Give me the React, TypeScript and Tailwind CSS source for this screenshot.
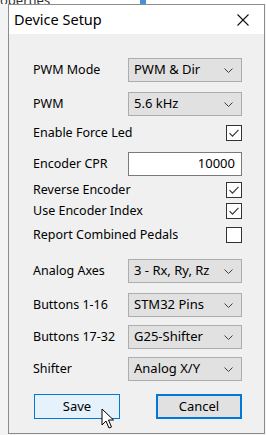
const font = "font-['Noto_Sans','Open_Sans',sans-serif]";

function Chevron() {
  return (
    <svg width="9" height="5" viewBox="0 0 9 5" fill="none">
      <path d="M0.5 0.5 L4.5 4.5 L8.5 0.5" stroke="#404040" strokeWidth="1" />
    </svg>
  );
}

function Select({ value }: { value: string }) {
  return (
    <div className="w-[114px] h-[24px] flex items-center justify-between pl-[5px] pr-[8px] bg-[#e1e1e1] border border-[#adadad] text-[13px] text-black">
      <span>{value}</span>
      <Chevron />
    </div>
  );
}

function Check({ checked }: { checked: boolean }) {
  return (
    <div className="w-[16px] h-[16px] bg-white border border-[#333] flex items-center justify-center">
      {checked && (
        <svg width="12" height="12" viewBox="0 0 12 12" fill="none">
          <path d="M1.5 6.2 L4.5 9.2 L10.5 2.8" stroke="#333" strokeWidth="1.1" />
        </svg>
      )}
    </div>
  );
}

function Row({ label, mt, children }: { label: string; mt: string; children: React.ReactNode }) {
  return (
    <div className={`flex items-center justify-between ${mt}`}>
      <span className="text-[12.5px] text-black leading-none">{label}</span>
      {children}
    </div>
  );
}

export default function App() {
  return (
    <div className={`w-[266px] h-[435px] bg-[#f3f3f3] overflow-hidden relative ${font}`}>
      {/* window behind the dialog */}
      <div className="h-[4px] bg-white overflow-hidden flex items-end">
        <span className="text-[13px] leading-none text-[#333] -ml-[13px] mb-[-3px]">Properties</span>
        <div className="ml-[90px] w-[6px] h-[4px] bg-[#4a90d9]" />
      </div>

      <div className="ml-[8px] w-[257px] h-[430px] border border-[#8c8c8c] bg-[#f0f0f0] flex flex-col">
        {/* Title bar */}
        <div className="h-[29px] bg-white flex items-center justify-between pl-[5px] pr-[15px]">
          <span className="text-[14.5px] text-black leading-none">Device Setup</span>
          <svg width="12" height="12" viewBox="0 0 12 12" fill="none">
            <path d="M0.5 0.5 L11.5 11.5 M11.5 0.5 L0.5 11.5" stroke="#111" strokeWidth="1.1" />
          </svg>
        </div>

        {/* Body */}
        <div className="flex-1 flex flex-col pl-[24px] pr-[22px]">
          <Row label="PWM Mode" mt="mt-[24px]">
            <Select value="PWM & Dir" />
          </Row>
          <Row label="PWM" mt="mt-[10px]">
            <Select value="5.6 kHz" />
          </Row>
          <Row label="Enable Force Led" mt="mt-[9px]">
            <Check checked />
          </Row>
          <Row label="Encoder CPR" mt="mt-[11px]">
            <div className="w-[114px] h-[24px] bg-white border border-[#7a7a7a] flex items-center justify-end pr-[6px] text-[13px] text-black">
              10000
            </div>
          </Row>
          <Row label="Reverse Encoder" mt="mt-[6px]">
            <Check checked />
          </Row>
          <Row label="Use Encoder Index" mt="mt-[5px]">
            <Check checked />
          </Row>
          <Row label="Report Combined Pedals" mt="mt-[8px]">
            <Check checked={false} />
          </Row>
          <Row label="Analog Axes" mt="mt-[16px]">
            <Select value="3 - Rx, Ry, Rz" />
          </Row>
          <Row label="Buttons 1-16" mt="mt-[10px]">
            <Select value="STM32 Pins" />
          </Row>
          <Row label="Buttons 17-32" mt="mt-[8px]">
            <Select value="G25-Shifter" />
          </Row>
          <Row label="Shifter" mt="mt-[8px]">
            <Select value="Analog X/Y" />
          </Row>

          <div className="flex justify-between mt-[13px] pl-[1px]">
            <button className="w-[86px] h-[25px] bg-[#e5f1fb] border border-[#0078d7] text-[13px] text-black">
              Save
            </button>
            <button className="w-[86px] h-[25px] bg-[#e1e1e1] border-2 border-[#0078d7] text-[13px] text-black">
              Cancel
            </button>
          </div>
        </div>
      </div>

      {/* mouse cursor over Save */}
      <svg className="absolute left-[101px] top-[408px]" width="13" height="22" viewBox="0 0 13 22">
        <path d="M1 1 L1 17 L5 13 L8 20 L10.5 19 L7.5 12 L12.5 12 Z" fill="white" stroke="black" strokeWidth="1" strokeLinejoin="round" />
      </svg>
    </div>
  );
}
